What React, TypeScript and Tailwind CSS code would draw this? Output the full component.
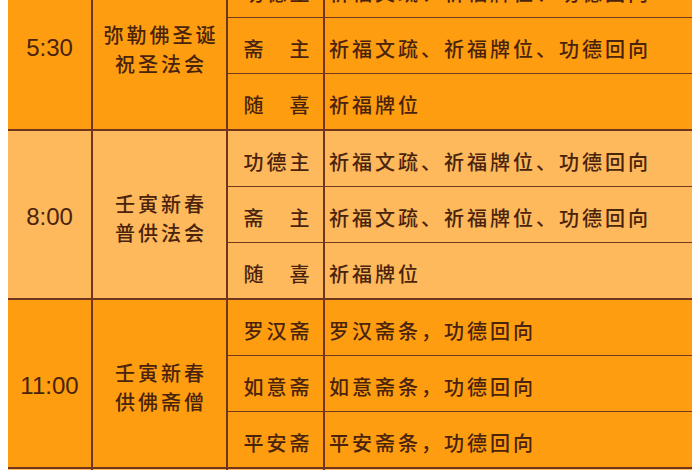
const groups = [
  {
    time: "5:30",
    name: ["弥勒佛圣诞", "祝圣法会"],
    light: false,
    rows: [
      { role: "功德主", text: "祈福文疏、祈福牌位、功德回向" },
      { role: "斋\u3000主", text: "祈福文疏、祈福牌位、功德回向" },
      { role: "随\u3000喜", text: "祈福牌位" },
    ],
  },
  {
    time: "8:00",
    name: ["壬寅新春", "普供法会"],
    light: true,
    rows: [
      { role: "功德主", text: "祈福文疏、祈福牌位、功德回向" },
      { role: "斋\u3000主", text: "祈福文疏、祈福牌位、功德回向" },
      { role: "随\u3000喜", text: "祈福牌位" },
    ],
  },
  {
    time: "11:00",
    name: ["壬寅新春", "供佛斋僧"],
    light: false,
    rows: [
      { role: "罗汉斋", text: "罗汉斋条，功德回向" },
      { role: "如意斋", text: "如意斋条，功德回向" },
      { role: "平安斋", text: "平安斋条，功德回向" },
    ],
  },
  {
    time: "",
    name: [],
    light: true,
    rows: [
      { role: "", text: "" },
      { role: "", text: "" },
      { role: "", text: "" },
    ],
  },
];

const cjk = { fontFamily: '"Noto Sans CJK SC", "Noto Sans", sans-serif' };

export default function App() {
  return (
    <div className="w-[700px] h-[470px] overflow-hidden bg-white pl-[8px]">
      <div className="w-[684px] -mt-[38px] text-[#4a230c]">
        {groups.map((g, i) => (
          <div
            key={i}
            className={`flex h-[169px] border-b-2 border-[#70351a] ${
              g.light ? "bg-[#fdb95c]" : "bg-[#fe9d10]"
            }`}
          >
            <div
              className="w-[85px] shrink-0 flex items-center justify-center border-r-2 border-[#70351a] text-[24px] pt-[4px]"
              style={{ fontFamily: '"Liberation Sans", Arial, sans-serif' }}
            >
              {g.time}
            </div>
            <div
              className="w-[135px] shrink-0 flex flex-col items-center justify-center border-r-2 border-[#70351a] text-[20px] leading-[29px] tracking-[3px] pl-[3px] pt-[6px] font-medium"
              style={cjk}
            >
              {g.name.map((n) => (
                <div key={n}>{n}</div>
              ))}
            </div>
            <div className="flex-1 flex flex-col">
              {g.rows.map((r, j) => (
                <div
                  key={j}
                  className={`flex-1 flex ${
                    j < 2 ? "border-b-[1.5px] border-[#74391c]" : ""
                  }`}
                  style={cjk}
                >
                  <div className="w-[97px] shrink-0 flex items-center justify-center border-r-2 border-[#70351a] text-[20px] font-medium tracking-[3px] pl-[5px] pt-[6px]">
                    {r.role}
                  </div>
                  <div className="flex-1 flex items-center pl-[4px] pt-[6px] text-[20px] font-medium tracking-[3px]">
                    {r.text}
                  </div>
                </div>
              ))}
            </div>
          </div>
        ))}
      </div>
    </div>
  );
}
